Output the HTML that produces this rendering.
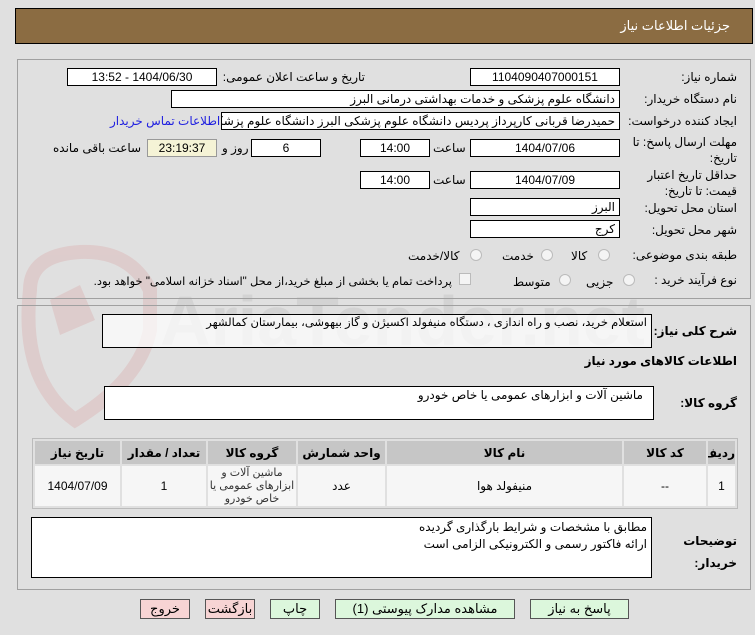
<!DOCTYPE html>
<html><head><meta charset="utf-8"><style>
*{box-sizing:border-box;margin:0;padding:0}
body{width:755px;height:635px;background:#e0e0e0;font-family:"Liberation Sans","DejaVu Sans",sans-serif;font-size:12px;color:#000;position:relative;overflow:hidden;direction:rtl}
.a{position:absolute;white-space:nowrap}
.box{position:absolute;background:#fff;border:1px solid #000;height:18px;line-height:16px;padding:0 4px;text-align:center;white-space:nowrap;overflow:hidden}
.lbl{position:absolute;text-align:right;white-space:nowrap;font-size:12px}
.rad{position:absolute;width:12px;height:12px;border:1px solid #bbb;border-radius:50%;background:#f4f4f4}
.btn{position:absolute;top:599px;height:20px;border:1px solid #555;text-align:center;line-height:18px;font-size:13px}
table{border-collapse:separate;border-spacing:2px;table-layout:fixed}
td,th{font-size:12px;text-align:center;overflow:hidden}
</style></head><body>
<svg class="a" style="left:0;top:0" width="755" height="635">
<g opacity="0.3">
<path d="M30 290 Q30 255 80 252 Q130 250 150 290 L150 330 Q140 380 75 420 Q20 380 30 290Z" fill="none" stroke="#d9a0a0" stroke-width="14"/>
<path d="M50 300 L80 285 L95 320 L60 335Z" fill="#d9a0a0"/>
<text x="160" y="345" font-size="70" font-weight="bold" fill="#b8b8b8" font-family="Liberation Sans" direction="ltr">AriaTender.net</text>
</g></svg>
<div class="a" style="left:15px;top:8px;width:738px;height:36px;background:#8b6c42;border:1px solid #000"></div>
<div class="a" style="right:25px;top:18px;color:#fff;font-size:13px">جزئیات اطلاعات نیاز</div>

<div class="a" style="left:17px;top:59px;width:734px;height:240px;border:1px solid #a0a0a0"></div>
<div class="a" style="left:17px;top:305px;width:734px;height:285px;border:1px solid #a0a0a0"></div>

<div class="lbl" style="right:18px;top:70px">شماره نیاز:</div>
<div class="box" style="left:470px;top:68px;width:150px">1104090407000151</div>
<div class="lbl" style="right:390px;top:70px">تاریخ و ساعت اعلان عمومی:</div>
<div class="box" style="left:67px;top:68px;width:150px">1404/06/30 - 13:52</div>

<div class="lbl" style="right:18px;top:92px">نام دستگاه خریدار:</div>
<div class="box" style="left:171px;top:90px;width:449px;text-align:right">دانشگاه علوم پزشکی و خدمات بهداشتی  درمانی البرز</div>

<div class="lbl" style="right:18px;top:114px">ایجاد کننده درخواست:</div>
<div class="box" style="left:221px;top:112px;width:399px;text-align:right">حمیدرضا قربانی کارپرداز پردیس دانشگاه علوم پزشکی البرز دانشگاه علوم پزشکی</div>
<div class="lbl" style="left:110px;top:114px;color:#2020e0">اطلاعات تماس خریدار</div>

<div class="lbl" style="right:18px;top:134px;line-height:16px">مهلت ارسال پاسخ: تا<br>تاریخ:</div>
<div class="box" style="left:470px;top:139px;width:150px">1404/07/06</div>
<div class="lbl" style="left:433px;top:141px">ساعت</div>
<div class="box" style="left:360px;top:139px;width:70px">14:00</div>
<div class="box" style="left:251px;top:139px;width:70px">6</div>
<div class="lbl" style="left:222px;top:141px">روز و</div>
<div class="box" style="left:147px;top:139px;width:70px;background:#f5f3d6;border-color:#999">23:19:37</div>
<div class="lbl" style="left:53px;top:141px">ساعت باقی مانده</div>

<div class="lbl" style="right:18px;top:167px;line-height:16px">حداقل تاریخ اعتبار<br>قیمت: تا تاریخ:</div>
<div class="box" style="left:470px;top:171px;width:150px">1404/07/09</div>
<div class="lbl" style="left:433px;top:173px">ساعت</div>
<div class="box" style="left:360px;top:171px;width:70px">14:00</div>

<div class="lbl" style="right:18px;top:201px">استان محل تحویل:</div>
<div class="box" style="left:470px;top:198px;width:150px;text-align:right">البرز</div>
<div class="lbl" style="right:18px;top:223px">شهر محل تحویل:</div>
<div class="box" style="left:470px;top:220px;width:150px;text-align:right">کرج</div>

<div class="lbl" style="right:18px;top:248px">طبقه بندی موضوعی:</div>
<div class="rad" style="left:598px;top:249px"></div><div class="lbl" style="left:571px;top:249px">کالا</div>
<div class="rad" style="left:541px;top:249px"></div><div class="lbl" style="left:502px;top:249px">خدمت</div>
<div class="rad" style="left:470px;top:249px"></div><div class="lbl" style="left:408px;top:249px">کالا/خدمت</div>

<div class="lbl" style="right:18px;top:273px">نوع فرآیند خرید :</div>
<div class="rad" style="left:623px;top:274px"></div><div class="lbl" style="left:586px;top:275px">جزیی</div>
<div class="rad" style="left:559px;top:274px"></div><div class="lbl" style="left:513px;top:275px">متوسط</div>
<div class="a" style="left:459px;top:273px;width:12px;height:12px;border:1px solid #bbb;background:#f4f4f4"></div>
<div class="lbl" style="right:303px;top:274px;font-size:11.5px">پرداخت تمام یا بخشی از مبلغ خرید،از محل "اسناد خزانه اسلامی" خواهد بود.</div>

<div class="lbl" style="right:18px;top:324px;font-weight:bold">شرح کلی نیاز:</div>
<div class="box" style="left:102px;top:314px;width:550px;height:34px;text-align:right;background:rgba(255,255,255,0.7);font-size:11.5px">استعلام خرید، نصب و راه اندازی ، دستگاه منیفولد اکسیژن و گاز بیهوشی، بیمارستان کمالشهر</div>
<div class="lbl" style="right:18px;top:354px;font-weight:bold">اطلاعات کالاهای مورد نیاز</div>

<div class="lbl" style="right:18px;top:396px;font-weight:bold">گروه کالا:</div>
<div class="box" style="left:104px;top:386px;width:550px;height:34px;text-align:right;padding-right:10px">ماشین آلات و ابزارهای عمومی یا خاص خودرو</div>

<div class="a" style="left:32px;top:438px;width:706px;height:71px;border:1px solid #bbb;white-space:normal">
<table style="width:704px;direction:rtl">
<colgroup><col style="width:27px"><col style="width:82px"><col style="width:235px"><col style="width:87px"><col style="width:88px"><col style="width:84px"><col></colgroup>
<tr style="height:23px;background:#c6c6c6"><th>ردیف</th><th>کد کالا</th><th>نام کالا</th><th>واحد شمارش</th><th>گروه کالا</th><th>تعداد / مقدار</th><th>تاریخ نیاز</th></tr>
<tr style="height:40px;background:#f6f6f6"><td>1</td><td>--</td><td>منیفولد هوا</td><td>عدد</td><td style="line-height:13px;color:#333;font-size:11px">ماشین آلات و ابزارهای عمومی یا خاص خودرو</td><td>1</td><td>1404/07/09</td></tr>
</table></div>

<div class="lbl" style="right:18px;top:530px;font-weight:bold;line-height:22px">توضیحات<br>خریدار:</div>
<div class="box" style="left:31px;top:517px;width:621px;height:61px;text-align:right;line-height:17px;padding-top:1px;white-space:normal">مطابق با مشخصات و شرایط بارگذاری گردیده<br>ارائه فاکتور رسمی و الکترونیکی الزامی است</div>

<div class="btn" style="left:140px;width:50px;background:#f7d4d4">خروج</div>
<div class="btn" style="left:205px;width:50px;background:#f7d4d4">بازگشت</div>
<div class="btn" style="left:270px;width:50px;background:#dcf7dc">چاپ</div>
<div class="btn" style="left:335px;width:180px;background:#dcf7dc">مشاهده مدارک پیوستی (1)</div>
<div class="btn" style="left:530px;width:99px;background:#dcf7dc">پاسخ به نیاز</div>
</body></html>
